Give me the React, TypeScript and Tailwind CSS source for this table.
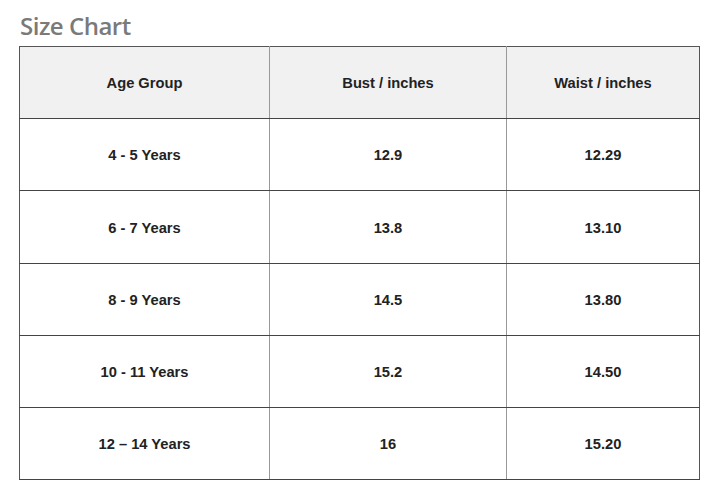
const rows = [
  ["4 - 5 Years", "12.9", "12.29"],
  ["6 - 7 Years", "13.8", "13.10"],
  ["8 - 9 Years", "14.5", "13.80"],
  ["10 - 11 Years", "15.2", "14.50"],
  ["12 – 14 Years", "16", "15.20"],
];

export default function App() {
  return (
    <div className="w-[720px] h-[494px] bg-white pl-[19px] pt-[10px]">
      <h1 className="text-[24px] leading-[32px] font-semibold text-[#7a7a7a] pl-[1px] font-['Open_Sans',sans-serif] tracking-[-0.5px]">
        Size Chart
      </h1>
      <table className="mt-[4px] w-[681px] table-fixed border-collapse border border-[#555] font-['Liberation_Sans',Arial,sans-serif] text-[14.7px] font-bold text-[#222]">
        <colgroup>
          <col className="w-[250px]" />
          <col className="w-[237px]" />
          <col />
        </colgroup>
        <thead>
          <tr className="h-[72px] bg-[#f1f1f1]">
            <th className="pt-[2px] border-b border-b-[#444] border-r border-r-[#999] text-center font-bold">Age Group</th>
            <th className="pt-[2px] border-b border-b-[#444] border-r border-r-[#999] text-center font-bold">Bust / inches</th>
            <th className="pt-[2px] border-b border-b-[#444] text-center font-bold">Waist / inches</th>
          </tr>
        </thead>
        <tbody>
          {rows.map((r, i) => (
            <tr key={i} className={i === 1 ? "h-[73px]" : "h-[72px]"}>
              <td className="pt-[2px] border-b border-b-[#444] border-r border-r-[#999] text-center">{r[0]}</td>
              <td className="pt-[2px] border-b border-b-[#444] border-r border-r-[#999] text-center">{r[1]}</td>
              <td className="pt-[2px] border-b border-b-[#444] text-center">{r[2]}</td>
            </tr>
          ))}
        </tbody>
      </table>
    </div>
  );
}
